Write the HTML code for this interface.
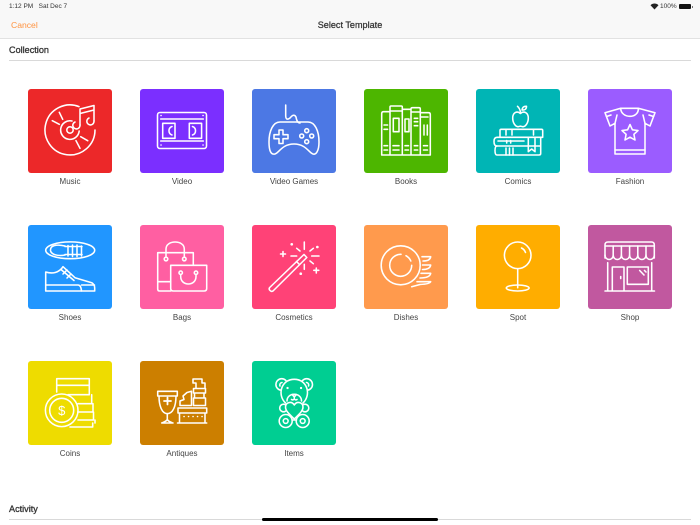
<!DOCTYPE html>
<html><head><meta charset="utf-8">
<style>
html,body{margin:0;padding:0;background:#fff}
body{width:700px;height:525px;position:relative;overflow:hidden;font-family:"Liberation Sans",sans-serif}
.a{position:absolute;white-space:nowrap}
.t{position:absolute;width:84px;height:84px;border-radius:3px}
.t svg{position:absolute;left:0;top:0;fill:none;stroke:#fff;stroke-width:1.55;stroke-linecap:round;stroke-linejoin:round}
.l{position:absolute;width:112px;text-align:center;font-size:8px;line-height:10px;color:#444}
</style></head><body>
<div class="a" style="left:0;top:0;width:700px;height:38px;background:#f8f8f8;border-bottom:1px solid #e2e2e2"></div>
<div class="a" style="left:9px;top:2px;font-size:6.5px;line-height:9px;color:#333">1:12 PM&nbsp;&nbsp; Sat Dec 7</div>
<div class="a" style="left:660px;top:2px;font-size:6.5px;line-height:9px;color:#333">100%</div>
<svg class="a" style="left:650px;top:3px" width="9" height="7" viewBox="0 0 9 7"><path d="M0.5 2.2C3 0 6 0 8.5 2.2L4.5 6.5Z" fill="#222"/></svg>
<div class="a" style="left:679px;top:4px;width:12px;height:5px;background:#111;border-radius:1px"></div>
<div class="a" style="left:692px;top:5.5px;width:1px;height:2px;background:#777"></div>
<div class="a" style="left:11px;top:20px;font-size:8.6px;line-height:11px;color:#ff9340">Cancel</div>
<div class="a" style="left:250px;width:200px;top:20px;text-align:center;font-size:9.1px;line-height:11px;color:#333;-webkit-text-stroke:.25px #333">Select Template</div>
<div class="a" style="left:9px;top:45px;font-size:9.1px;line-height:11px;color:#333;-webkit-text-stroke:.3px #333">Collection</div>
<div class="a" style="left:9px;top:60px;width:682px;height:1px;background:#d9d9d9"></div>

<div class="t" style="left:28px;top:89px;background:#ec2829"><svg width="84" height="84" viewBox="0 0 84 84">
<path d="M51 17.6A25 25 0 1 0 67 41"/><path d="M44 32A9.3 9.3 0 1 0 51.2 42"/><circle cx="42" cy="41" r="3.2"/>
<path d="M31.3 23.3L34.7 30.3M24.3 31.7L31.3 35.3M59.7 51.7L52.7 47.7M52 59.3L48 51.7"/>
<path d="M52 36V20L66 16.5V32M52 24.5L66 21"/><path d="M52 36A3.6 3.6 0 1 1 47 33"/><path d="M66 32A3.6 3.6 0 1 1 61 29"/>
</svg></div>
<div class="t" style="left:140px;top:89px;background:#7b2fff"><svg width="84" height="84" viewBox="0 0 84 84">
<rect x="17.5" y="23.5" width="49" height="36" rx="2.5"/><path d="M20.7 30H63.3M20.7 52H63.3"/>
<rect x="22.7" y="34.3" width="12.3" height="15"/><rect x="49.3" y="34.3" width="12.3" height="15"/>
<path d="M32 37.5A4.5 4.5 0 0 0 32 46M52.5 37.5A4.5 4.5 0 0 1 52.5 46"/>
<path d="M21 26.5h.1M63 26.5h.1M21 56h.1M63 56h.1"/>
</svg></div>
<div class="t" style="left:252px;top:89px;background:#4c78e4"><svg width="84" height="84" viewBox="0 0 84 84">
<path d="M33.7 16V27Q34 32 38 29Q42 24 44 28Q45 34 48 34"/>
<path d="M28 33H56C63 33 67 42 67 53C67 62 64 66 61 65C57 64 54 55 42 55C30 55 27 64 23 65C19 66 17 62 17 53C17 42 21 33 28 33Z"/>
<path d="M27 41H31V45.7H36V49.7H31V54.5H27V49.7H22V45.7H27Z"/>
<circle cx="54.7" cy="41.7" r="2"/><circle cx="49.7" cy="47" r="2"/><circle cx="59.7" cy="47" r="2"/><circle cx="54.7" cy="52.7" r="2"/>
</svg></div>
<div class="t" style="left:364px;top:89px;background:#4db600"><svg width="84" height="84" viewBox="0 0 84 84">
<path d="M17.7 66V24.5Q17.7 22.7 19.5 22.7H26M26 66V18Q26 17 27 17H37.3Q38.3 17 38.3 18V66M38.3 20.3H47V66M47 66V20Q47 18.7 48.5 18.7H55Q56.3 18.7 56.3 20V66M56.3 23.7H64.5Q66.3 23.7 66.3 25.5V66M17.7 66H66.3"/>
<rect x="29.3" y="29.3" width="5.7" height="13.4"/><rect x="41" y="30" width="4" height="12.7"/>
<path d="M20 36H23.6M20 40.3H23.6M50.3 29.3H53.7M50.3 32.7H53.7M50.3 36.7H53.7M60 36V46M63.3 36V46M20 56.7H23.6M20 61H23.6M29 56.7H35M29 61H35M41 56.7H44.5M41 61H44.5M50.3 56.7H53.7M50.3 61H53.7M59.5 56.7H63.5M59.5 61H63.5M26.5 22H38M47.5 23H56M56.5 28H64"/>
</svg></div>
<div class="t" style="left:476px;top:89px;background:#00b5b5"><svg width="84" height="84" viewBox="0 0 84 84">
<path d="M44.4 24.5C41 21.5 36.7 23.5 36.7 29C36.7 34 39.5 37.7 42 37.7C43 37.7 43.5 37.2 44.4 37.2C45.3 37.2 46 37.7 47 37.7C49.5 37.7 52.3 34 52.3 29C52.3 23.5 47.8 21.5 44.4 24.5Z"/>
<path d="M44.5 23.5Q44 19.5 41.5 17.3M46 21Q46.5 17 50.5 17.3Q50.5 21.5 46 21Z"/>
<path d="M24 48.3V41.5Q24 40.3 25.2 40.3H65.5Q66.7 40.3 66.7 41.5V48.3H59"/>
<path d="M59 48.3H21Q18 48.3 18 52.6Q18 57 21 57H59"/>
<path d="M59 49V62.7L55.7 60L52.3 62.7V49"/>
<path d="M21 57Q19 57 19 61.5Q19 66 21 66H63Q64.7 66 64.7 64.5V48.5M59 57H64.7"/>
<path d="M30.7 51.5V54M34.7 51.5V54M30 59V66M33.5 59V66M37 59V66M30 40.3V46M36 40.3V46M57.5 40.3V46M22 52H48"/>
</svg></div>
<div class="t" style="left:588px;top:89px;background:#9b5cff"><svg width="84" height="84" viewBox="0 0 84 84">
<path d="M32.7 19.3C33 30 51 30 50.3 19.3H32.7L17 23.7L22 37L27 34.3V65H57V34.3L62 37L67 23.7L50.3 19.3"/>
<path d="M27 34.3L29 26M57 34.3L55 26M18.5 27.5L23 26M65.5 27.5L61 26M27 61H57"/>
<path d="M42 35.5L44.4 40.8L50 41.5L45.9 45.3L47 51L42 48.2L37 51L38.1 45.3L34 41.5L39.6 40.8Z"/>
</svg></div>

<div class="t" style="left:28px;top:225px;background:#2196ff"><svg width="84" height="84" viewBox="0 0 84 84">
<ellipse cx="42.2" cy="25.3" rx="24.5" ry="8.4"/>
<path d="M37 21C28 19 22 20.5 22.5 25.5C23 29.5 30 31.5 37 30"/>
<path d="M37 21.5H54M37 29.5H54M40 20.5V31M44.5 20V31.5M49 20V31.5M53.5 21V31"/>
<path d="M17.7 47C24 49 31 48 35 41.7L47 52.7L63.7 57.7Q66.7 59.5 66.7 63V66H17.7Z"/>
<path d="M17.7 60H50Q53 60 53.5 66M53.5 60H66.5M33 44.5L46 55.5M39 45L35 49M43 49L39 53"/>
</svg></div>
<div class="t" style="left:140px;top:225px;background:#ff5fa2"><svg width="84" height="84" viewBox="0 0 84 84">
<path d="M30.7 66H19.5Q17.7 66 17.7 64V27.7H26M44.3 27.7H53.3V40.3M26 27.7H44.3M17.7 56.7H30.7"/>
<path d="M26 32V24C26 14.7 44.3 14.7 44.3 24V32"/><circle cx="26" cy="34" r="1.8"/><circle cx="44.3" cy="34" r="1.8"/>
<path d="M30.7 40.3H66.7V63.5Q66.7 66 64 66H33.5Q30.7 66 30.7 63.5Z"/>
<circle cx="40.7" cy="47.7" r="1.7"/><circle cx="56" cy="47.7" r="1.7"/>
<path d="M40.7 49.5V51.5C40.7 61.5 56 61.5 56 51.5V49.5"/>
</svg></div>
<div class="t" style="left:252px;top:225px;background:#ff4277"><svg width="84" height="84" viewBox="0 0 84 84">
<path d="M52 29.5L54.8 32.5L21 66Q19.5 67 18 65.5Q16.5 64 17.7 62.5Z"/><path d="M44.5 36.5L47.5 39.5"/>
<path d="M52.3 17V24.3M39 31H44.7M59.7 31H67M52.3 39.3V44.3M44.7 23.3L48 26M61.3 23.3L58 26M58 36L61.3 38.7"/>
<path d="M39.7 19.3h.1M65.3 22h.1M48.7 48.7h.1" stroke-width="2.6"/>
<path d="M31 26.5V31.5M28.5 29H33.5M64.3 43V48M61.8 45.3H66.8"/>
</svg></div>
<div class="t" style="left:364px;top:225px;background:#ff9a4d"><svg width="84" height="84" viewBox="0 0 84 84">
<circle cx="36.7" cy="40.3" r="19.5"/>
<path d="M37 29.3A11 11 0 1 0 47.7 40.3M42 30.7A11 11 0 0 1 46.8 36"/>
<path d="M58 31.7H66.7Q66 36 59 36M58.5 40H66.7Q66 44.5 58.5 44.5M57 48.3H66.7Q66 53 56 53M53 56.7H66.7Q66 59 56 59.5L47.7 61.7"/>
</svg></div>
<div class="t" style="left:476px;top:225px;background:#ffad00"><svg width="84" height="84" viewBox="0 0 84 84">
<circle cx="41.7" cy="30.3" r="13.3"/><path d="M45.5 23A8 8 0 0 1 49.5 27.5"/>
<path d="M41.7 43.7V62.7"/><ellipse cx="41.7" cy="63" rx="11.4" ry="3"/>
</svg></div>
<div class="t" style="left:588px;top:225px;background:#c1589f"><svg width="84" height="84" viewBox="0 0 84 84">
<path d="M17 33V20Q17 17 20 17H63.5Q66.3 17 66.3 20V33M17 21H66.3"/>
<path d="M17 30C17 36 25.2 36 25.2 30C25.2 36 33.4 36 33.4 30C33.4 36 41.6 36 41.6 30C41.6 36 49.8 36 49.8 30C49.8 36 58 36 58 30C58 36 66.3 36 66.3 30"/>
<path d="M25.2 21V30M33.4 21V30M41.6 21V30M49.8 21V30M58 21V30"/>
<path d="M19.7 37.7V66M63.7 37.7V66M17 66H66.5M24.3 66V42H36V66"/>
<rect x="39.3" y="42" width="21" height="17.3"/><path d="M32.7 51.5V53.5M51.7 45.5L56 50M56.5 45.5L58 47"/>
</svg></div>

<div class="t" style="left:28px;top:361px;background:#eedc00"><svg width="84" height="84" viewBox="0 0 84 84">
<circle cx="33.7" cy="49.3" r="16.3"/><circle cx="33.7" cy="49.3" r="12"/>
<text x="33.7" y="54" font-size="13" text-anchor="middle" fill="#fff" stroke="none" font-family="Liberation Sans">$</text>
<path d="M28.7 31V17.7H61.3V24.3H28.7M61.3 24.3V33.7H40M63.7 33.7V37.5M50 42.7H63.7V37.5M65 42.7V51H50M65.5 51V59H50M67 59V62M64.7 62V66H42"/>
</svg></div>
<div class="t" style="left:140px;top:361px;background:#cc7f00"><svg width="84" height="84" viewBox="0 0 84 84">
<path d="M17.7 30.3H37.3V35H17.7ZM19 35C19 45 22 52.7 27.3 52.7C33 52.7 36 45 36 35"/>
<path d="M27.3 52.7V58C27.3 60 24 61 21.7 62H33C30.5 61 27.3 60 27.3 58"/>
<path d="M27.5 36.5V43.5M24 40H31" stroke-width="1.8"/>
<path d="M38 47H66.7V52H38ZM39.5 52H65V62H39.5ZM37.5 62H66.7"/>
<path d="M44 55.5h.1M48.5 55.5h.1M53 55.5h.1M57.5 55.5h.1M62 55.5h.1"/>
<path d="M40 44.5V40L44 38.5L43 35L47 31.5L51.5 30.3V44.5H40"/>
<path d="M53 18V22H56V27.5H65V22H62V18ZM53.5 27.5H65.5V32H53.5ZM54.5 32H64V37H54.5ZM53.5 37H65.5V44.5H53.5Z"/>
</svg></div>
<div class="t" style="left:252px;top:361px;background:#00ce92"><svg width="84" height="84" viewBox="0 0 84 84">
<circle cx="29.7" cy="23.5" r="5.8"/><circle cx="54.7" cy="23.5" r="5.8"/><path d="M28 25A2.5 2.5 0 0 1 30 21.5M56.5 25A2.5 2.5 0 0 0 54.5 21.5"/>
<path d="M33.5 42C25 34 29 18.3 42.3 18.3C55.5 18.3 59.5 34 51 42" fill="#00ce92"/>
<path d="M35 40C35 31 49.5 31 49.5 40"/><path d="M40 33.5H44.5L42.3 36ZM42.3 36V38M39.5 38.5Q41 39.5 42.3 38Q43.6 39.5 45 38.5"/>
<path d="M35.5 27h.1M49 27h.1" stroke-width="2.2"/>
<circle cx="33.7" cy="60" r="6.5"/><circle cx="50.7" cy="60" r="6.5"/><circle cx="33.7" cy="60" r="2.4"/><circle cx="50.7" cy="60" r="2.4"/>
<circle cx="31.5" cy="47" r="3.8"/><circle cx="53" cy="47" r="3.8"/>
<path d="M42.3 44C39.5 39.5 33.5 41.5 33.5 46C33.5 50.5 38.5 54 42.3 58C46 54 51 50.5 51 46C51 41.5 45 39.5 42.3 44Z" fill="#00ce92"/>
<path d="M40 59H44.5"/>
</svg></div>

<div class="l" style="left:14px;top:176.500px">Music</div>
<div class="l" style="left:126px;top:176.500px">Video</div>
<div class="l" style="left:238px;top:176.500px">Video Games</div>
<div class="l" style="left:350px;top:176.500px">Books</div>
<div class="l" style="left:462px;top:176.500px">Comics</div>
<div class="l" style="left:574px;top:176.500px">Fashion</div>
<div class="l" style="left:14px;top:312.500px">Shoes</div>
<div class="l" style="left:126px;top:312.500px">Bags</div>
<div class="l" style="left:238px;top:312.500px">Cosmetics</div>
<div class="l" style="left:350px;top:312.500px">Dishes</div>
<div class="l" style="left:462px;top:312.500px">Spot</div>
<div class="l" style="left:574px;top:312.500px">Shop</div>
<div class="l" style="left:14px;top:448.500px">Coins</div>
<div class="l" style="left:126px;top:448.500px">Antiques</div>
<div class="l" style="left:238px;top:448.500px">Items</div>

<div class="a" style="left:9px;top:504px;font-size:9.1px;line-height:11px;color:#333;-webkit-text-stroke:.3px #333">Activity</div>
<div class="a" style="left:9px;top:519px;width:682px;height:1px;background:#d9d9d9"></div>
<div class="a" style="left:262px;top:518px;width:176px;height:3px;border-radius:2px;background:#000"></div>
</body></html>
